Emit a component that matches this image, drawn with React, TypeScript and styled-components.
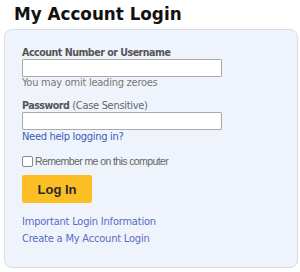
import React from "react";
import styled, { createGlobalStyle } from "styled-components";

const Global = createGlobalStyle`
  html, body { margin: 0; padding: 0; background: #ffffff; }
  body { font-family: "DejaVu Sans Condensed", "DejaVu Sans", sans-serif; }
`;

const Page = styled.div`
  width: 300px;
  height: 272px;
  box-sizing: border-box;
  padding: 4px 2px 0 4px;
`;

const Title = styled.h1`
  margin: 0 0 5px 10px;
  font-family: "DejaVu Sans", sans-serif;
  font-weight: bold;
  font-size: 16.8px;
  line-height: 20px;
  color: #111;
`;

const Panel = styled.form`
  box-sizing: border-box;
  height: 239px;
  margin: 0;
  padding: 16px 17px 0 17px;
  background: #eff4fc;
  border: 1px solid #d9dde3;
  border-radius: 8px;
  display: flex;
  flex-direction: column;
  align-items: flex-start;
`;

const Label = styled.label<{ $gap?: number }>`
  display: block;
  margin-top: ${(p) => p.$gap ?? 0}px;
  font-size: 11px;
  line-height: 12px;
  letter-spacing: -0.3px;
  color: #666;
  b { font-weight: bold; color: #555; font-size: 10.6px; letter-spacing: -0.5px; }
`;

const Input = styled.input`
  box-sizing: border-box;
  width: 200px;
  height: 18px;
  margin: 0;
  border: 1px solid #a9a9a9;
  border-radius: 1px;
  background: #fff;
`;

const Hint = styled.div`
  font-size: 11px;
  line-height: 12px;
  letter-spacing: -0.25px;
  color: #777;
`;

const Link = styled.a<{ $gap?: number }>`
  display: block;
  margin-top: ${(p) => p.$gap ?? 0}px;
  font-size: 11px;
  line-height: 12px;
  letter-spacing: -0.3px;
  color: #3d5ab8;
  text-decoration: none;
`;

const CheckRow = styled.label`
  display: flex;
  align-items: center;
  gap: 2px;
  margin-top: 12px;
  font-family: "Liberation Sans", Arial, sans-serif;
  font-size: 10.5px;
  line-height: 13px;
  letter-spacing: -0.6px;
  color: #666;
`;

const Box = styled.span`
  box-sizing: border-box;
  width: 11px;
  height: 11px;
  border: 1px solid #888;
  border-radius: 2px;
  background: #fff;
`;

const Button = styled.button`
  margin-top: 7px;
  width: 70px;
  height: 28px;
  padding: 0;
  border: none;
  border-radius: 2px;
  background: #fbbf24;
  font-family: "Liberation Sans", Arial, sans-serif;
  font-weight: bold;
  font-size: 13px;
  color: #2a2a2a;
`;

const Links = styled.div`
  margin-top: 13px;
  display: flex;
  flex-direction: column;
  gap: 5px;
`;

const FootLink = styled.a`
  font-size: 11px;
  line-height: 12px;
  letter-spacing: -0.2px;
  color: #5a6bc4;
  text-decoration: none;
`;

export default function App() {
  return (
    <Page>
      <Global />
      <Title>My Account Login</Title>
      <Panel onSubmit={(e) => e.preventDefault()}>
        <Label><b>Account Number or Username</b></Label>
        <Input type="text" />
        <Hint>You may omit leading zeroes</Hint>
        <Label $gap={10}><b>Password</b> (Case Sensitive)</Label>
        <Input type="password" />
        <Link href="#" $gap={1}>Need help logging in?</Link>
        <CheckRow><Box />Remember me on this computer</CheckRow>
        <Button type="submit">Log In</Button>
        <Links>
          <FootLink href="#">Important Login Information</FootLink>
          <FootLink href="#">Create a My Account Login</FootLink>
        </Links>
      </Panel>
    </Page>
  );
}
